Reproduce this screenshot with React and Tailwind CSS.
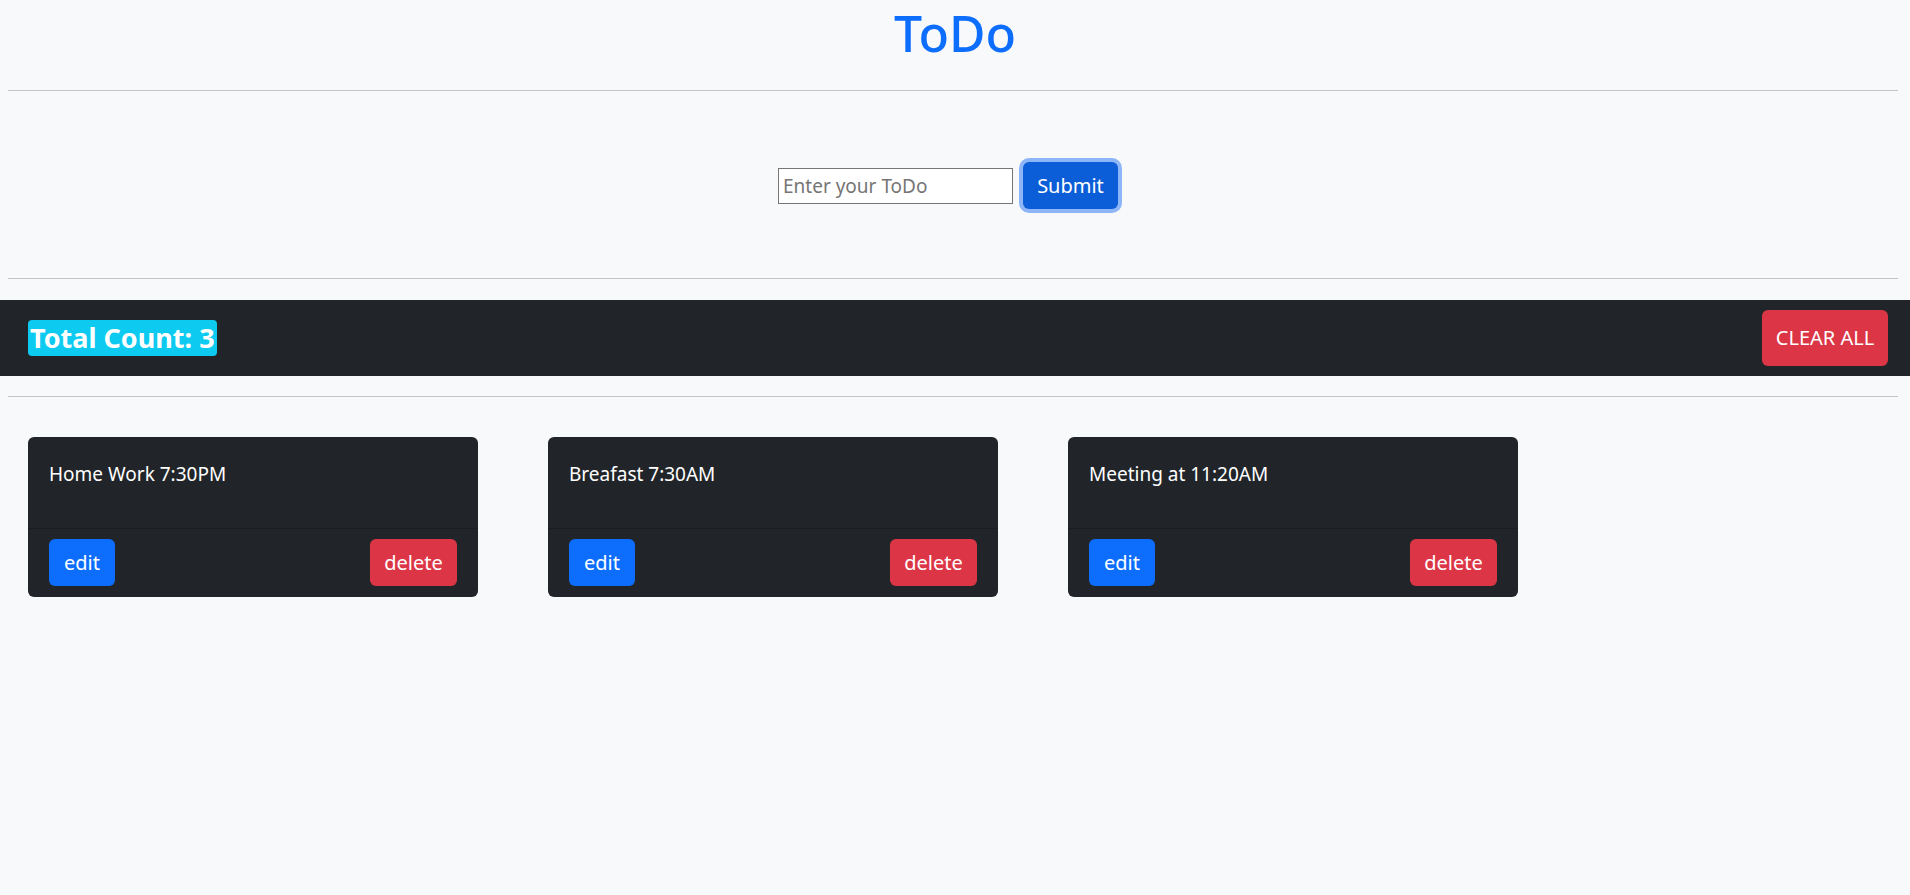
import { useState } from 'react';

const font = { fontFamily: '"Noto Sans", "Open Sans", sans-serif' };

export default function App() {
  const [todos] = useState(['Home Work 7:30PM', 'Breafast 7:30AM', 'Meeting at 11:20AM']);

  return (
    <div className="min-h-[895px] bg-[#f8f9fa] text-[#212529]" style={font}>
      <h1 className="pt-[3px] text-center text-[50px] font-medium leading-[1.2] text-[#0d6efd]">ToDo</h1>
      <hr className="ml-2 mr-3 mt-[27px] border-t border-[#c4c5c6]" />

      {/* Add todo */}
      <div className="flex h-[187px] items-center justify-center gap-[10px] pr-[14px] pt-[2px]">
        <input
          type="text"
          placeholder="Enter your ToDo"
          className="h-[36px] w-[235px] border border-[#767676] bg-white px-1 text-[19px] placeholder:text-[#757575]"
        />
        <button className="h-[47px] w-[95px] rounded-md bg-[#0b5ed7] text-[20px] text-white ring-[4px] ring-[#8db5f8]">
          Submit
        </button>
      </div>
      <hr className="ml-2 mr-3 border-t border-[#c4c5c6]" />

      {/* Count bar */}
      <div className="mt-[21px] flex h-[76px] items-center justify-between bg-[#212529] pl-[28px] pr-[22px]">
        <span className="rounded-[4px] bg-[#0dcaf0] px-[2px] text-[27px] font-bold leading-[36px] text-white">Total Count: 3</span>
        <button className="h-[56px] w-[126px] rounded-md bg-[#dc3545] text-[20px] text-white">CLEAR ALL</button>
      </div>
      <hr className="ml-2 mr-3 mt-[20px] border-t border-[#c4c5c6]" />

      {/* Cards */}
      <div className="mt-[40px] flex gap-[70px] pl-[28px]">
        {todos.map((t, i) => (
          <div key={i} className="flex h-[160px] w-[450px] flex-col rounded-md bg-[#212529] text-white">
            <div className="h-[91px] px-[21px] pt-[22px] text-[19px] leading-[30px]">{t}</div>
            <div className="flex items-center justify-between border-t border-[#1b1e21] px-[21px] pt-[10px]">
              <button className="h-[47px] w-[66px] rounded-md bg-[#0d6efd] text-[20px] text-white">edit</button>
              <button className="h-[47px] w-[87px] rounded-md bg-[#dc3545] text-[20px] text-white">delete</button>
            </div>
          </div>
        ))}
      </div>
    </div>
  );
}
